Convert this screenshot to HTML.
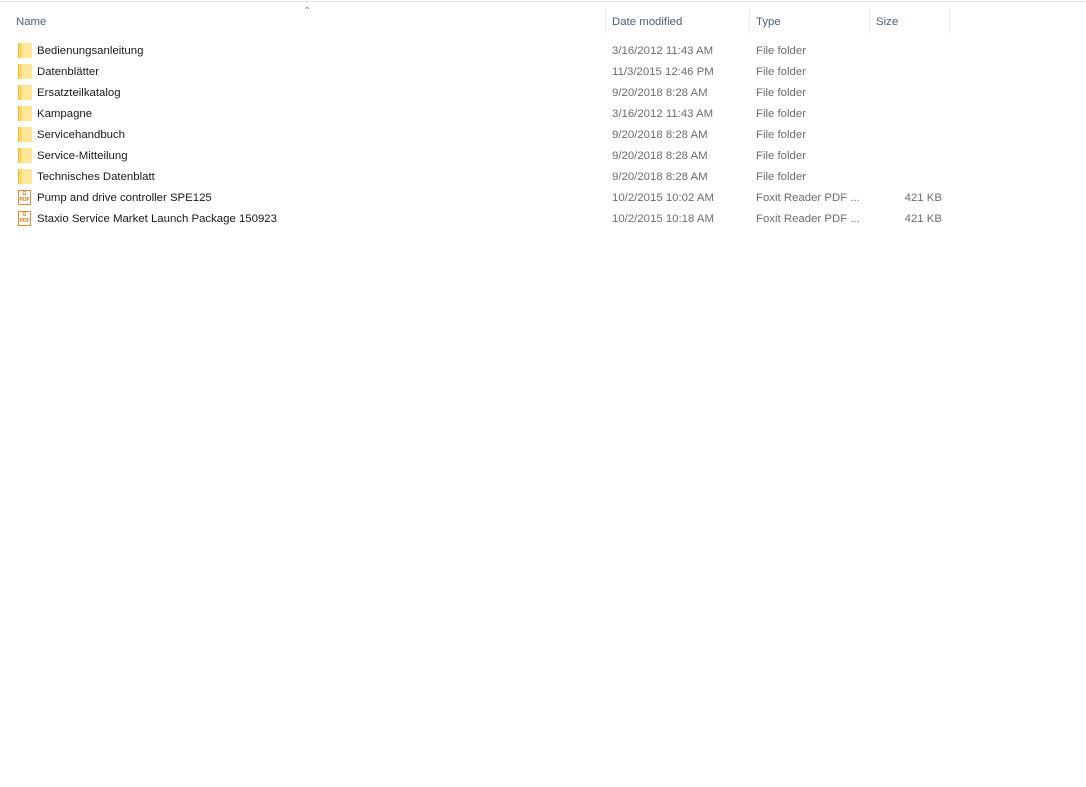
<!DOCTYPE html>
<html><head><meta charset="utf-8"><style>
html,body{margin:0;padding:0;background:#fff;width:1086px;height:787px;overflow:hidden;font-family:"Liberation Sans",sans-serif;font-size:11.4px;}
.top{position:absolute;left:0;top:1px;width:1086px;height:1px;background:#e3e3e3}
.h{position:absolute;top:15px;color:#4c607a;line-height:15px}
.d{position:absolute;top:8px;width:1px;height:26px;background:#ececec}
.c{position:absolute;color:#1a1a1a;line-height:15px;white-space:nowrap}
.g{color:#6d6d6d}
.r{text-align:right;width:80px}
.f{position:absolute;left:18px;width:14px;height:15px;background:#fcd86a;border-left:1px solid #e8b83a;box-sizing:border-box}
.f:after{content:"";position:absolute;right:0;top:0;width:10px;height:15px;background:#ffe79a}
.p{position:absolute;left:18px;width:13px;height:15px;border:1px solid #e58a2a;box-sizing:border-box;background:#fff;font-size:5px;color:#e07a1a;text-align:center;line-height:6px;font-weight:bold}
</style></head><body>
<div class="top"></div>
<div class="h" style="left:16px">Name</div>
<div style="position:absolute;left:303px;top:6px;color:#888;font-size:10px">&#8963;</div>
<div class="d" style="left:605px"></div>
<div class="h" style="left:612px">Date modified</div>
<div class="d" style="left:749px"></div>
<div class="h" style="left:756px">Type</div>
<div class="d" style="left:869px"></div>
<div class="h" style="left:876px">Size</div>
<div class="d" style="left:949px"></div>

<div class="f" style="top:43px"></div><div class="c" style="left:37px;top:44px">Bedienungsanleitung</div><div class="c g" style="left:612px;top:44px">3/16/2012 11:43 AM</div><div class="c g" style="left:756px;top:44px">File folder</div>
<div class="f" style="top:64px"></div><div class="c" style="left:37px;top:65px">Datenblätter</div><div class="c g" style="left:612px;top:65px">11/3/2015 12:46 PM</div><div class="c g" style="left:756px;top:65px">File folder</div>
<div class="f" style="top:85px"></div><div class="c" style="left:37px;top:86px">Ersatzteilkatalog</div><div class="c g" style="left:612px;top:86px">9/20/2018 8:28 AM</div><div class="c g" style="left:756px;top:86px">File folder</div>
<div class="f" style="top:106px"></div><div class="c" style="left:37px;top:107px">Kampagne</div><div class="c g" style="left:612px;top:107px">3/16/2012 11:43 AM</div><div class="c g" style="left:756px;top:107px">File folder</div>
<div class="f" style="top:127px"></div><div class="c" style="left:37px;top:128px">Servicehandbuch</div><div class="c g" style="left:612px;top:128px">9/20/2018 8:28 AM</div><div class="c g" style="left:756px;top:128px">File folder</div>
<div class="f" style="top:148px"></div><div class="c" style="left:37px;top:149px">Service-Mitteilung</div><div class="c g" style="left:612px;top:149px">9/20/2018 8:28 AM</div><div class="c g" style="left:756px;top:149px">File folder</div>
<div class="f" style="top:169px"></div><div class="c" style="left:37px;top:170px">Technisches Datenblatt</div><div class="c g" style="left:612px;top:170px">9/20/2018 8:28 AM</div><div class="c g" style="left:756px;top:170px">File folder</div>
<div class="p" style="top:190px">G<br>PDF</div><div class="c" style="left:37px;top:191px">Pump and drive controller SPE125</div><div class="c g" style="left:612px;top:191px">10/2/2015 10:02 AM</div><div class="c g" style="left:756px;top:191px">Foxit Reader PDF ...</div><div class="c g r" style="left:862px;top:191px">421 KB</div>
<div class="p" style="top:211px">G<br>PDF</div><div class="c" style="left:37px;top:212px">Staxio Service Market Launch Package 150923</div><div class="c g" style="left:612px;top:212px">10/2/2015 10:18 AM</div><div class="c g" style="left:756px;top:212px">Foxit Reader PDF ...</div><div class="c g r" style="left:862px;top:212px">421 KB</div>
</body></html>
